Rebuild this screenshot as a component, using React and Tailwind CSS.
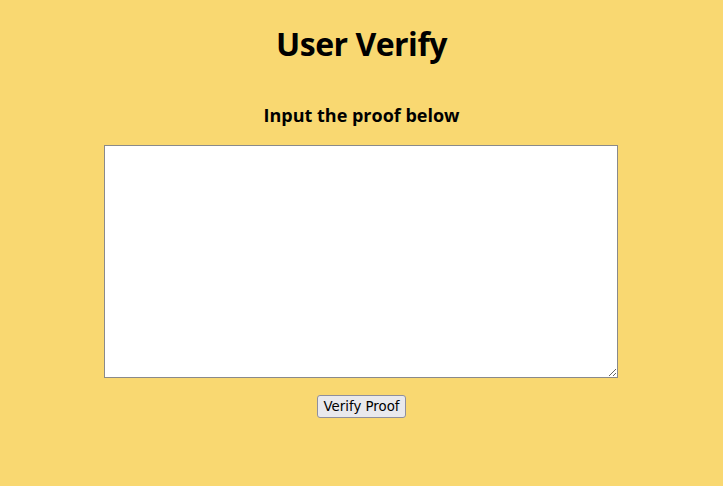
export default function App() {
  return (
    <div className="min-h-[486px] w-full bg-[#f9d871] flex flex-col items-center font-['Open_Sans',sans-serif] text-black">
      <h1 className="mt-[24px] text-[32px] leading-[40px] font-bold tracking-[-0.5px]">
        User Verify
      </h1>
      <h3 className="mt-[39px] text-[18px] leading-[24px] font-bold">
        Input the proof below
      </h3>
      <textarea
        className="mt-[18px] mr-[2px] w-[514px] h-[233px] bg-white border border-[#8a8a8a] resize-y outline-none block"
        aria-label="proof"
      />
      <button className="mt-[17px] h-[23px] px-[5px] bg-[#e9e9ed] border border-[#8f8f9d] rounded-[3px] text-[13.33px] leading-[16px] font-['DejaVu_Sans',sans-serif] text-black">
        Verify Proof
      </button>
    </div>
  );
}
